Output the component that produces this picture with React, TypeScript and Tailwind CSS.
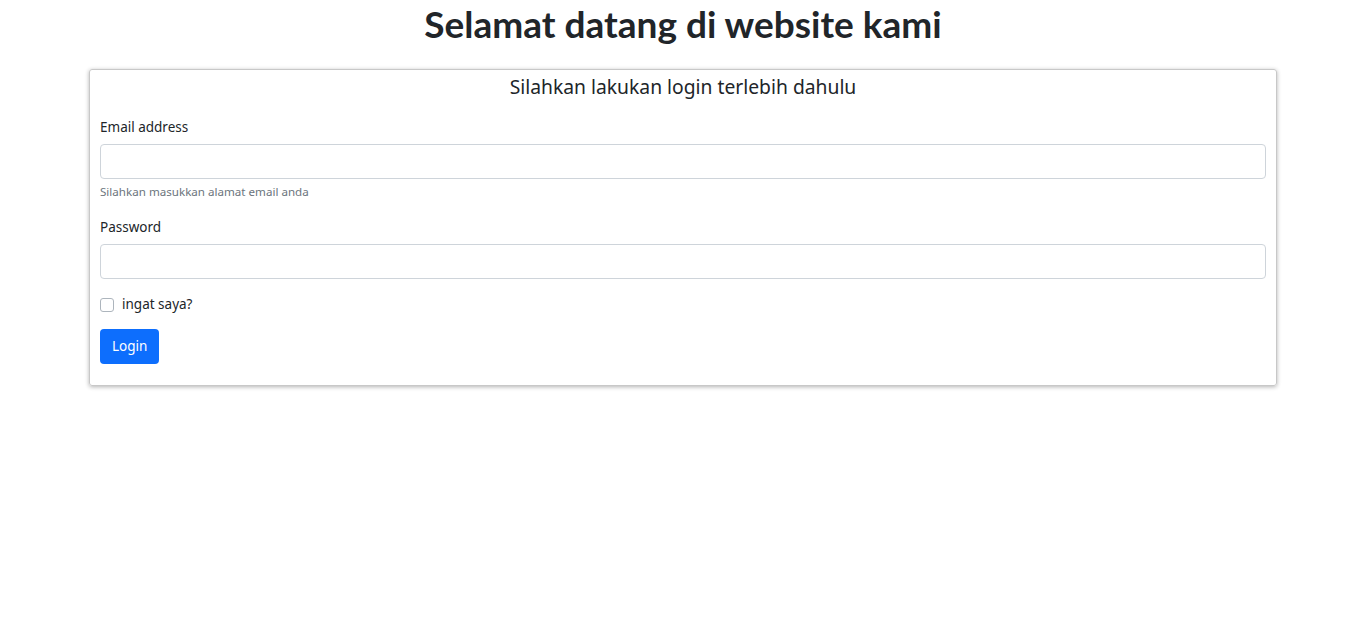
export default function App() {
  return (
    <div className="min-h-screen bg-white text-[#212529] font-['Noto_Sans',sans-serif]">
      <h1 className="text-center text-[37px] leading-[48px] font-bold mb-[21px] font-['Lato',sans-serif]">
        Selamat datang di website kami
      </h1>

      <div className="mx-[89px] border border-[#c8c8c8] rounded-[3px] shadow-[0_1px_4px_rgba(0,0,0,0.3)] px-[10px] pt-[5px] pb-[21px]">
        <h5 className="text-center text-[19.3px] leading-[24px] mb-[18px]">
          Silahkan lakukan login terlebih dahulu
        </h5>

        <form>
          <div className="mb-[16px]">
            <label className="block text-[13.5px] leading-[21px] mb-[6px]">Email address</label>
            <input
              type="email"
              className="block w-full h-[35px] border border-[#ced4da] rounded-[4px] px-3 text-[14px]"
            />
            <div className="text-[11.6px] leading-[18px] text-[#6c757d] mt-[4px]">
              Silahkan masukkan alamat email anda
            </div>
          </div>

          <div className="mb-[15px]">
            <label className="block text-[13.5px] leading-[21px] mb-[6px]">Password</label>
            <input
              type="password"
              className="block w-full h-[35px] border border-[#ced4da] rounded-[4px] px-3 text-[14px]"
            />
          </div>

          <div className="flex items-center gap-[8px] mb-[14px] h-[21px]">
            <span className="w-[14px] h-[14px] border border-[#adb5bd] rounded-[3px] bg-white" />
            <span className="text-[13.5px] leading-[21px]">ingat saya?</span>
          </div>

          <button
            type="button"
            className="h-[35px] px-[12px] bg-[#0d6efd] text-white text-[13.5px] rounded-[4px]"
          >
            Login
          </button>
        </form>
      </div>
    </div>
  )
}
